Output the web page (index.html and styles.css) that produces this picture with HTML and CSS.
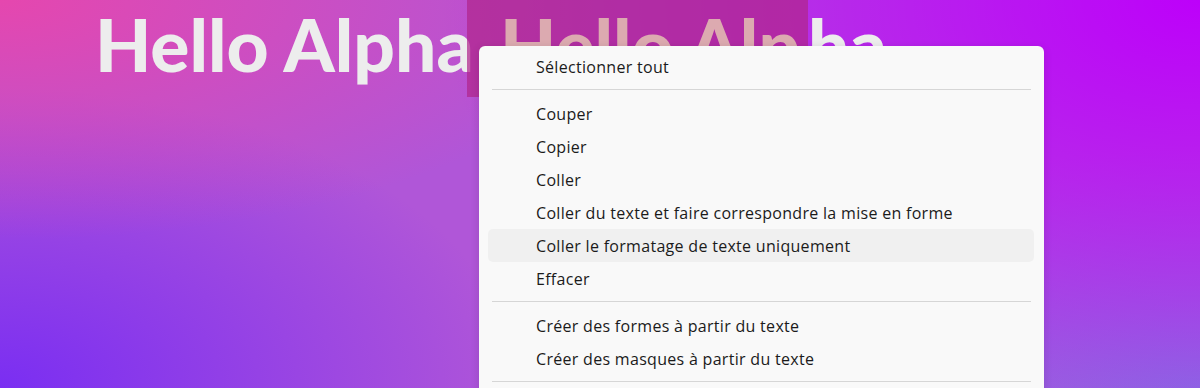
FILE: index.html
```html
<!DOCTYPE html>
<html lang="fr">
<head>
<meta charset="utf-8">
<link rel="stylesheet" href="styles.css">
</head>
<body>
<div class="stage">
  <h1 class="headline">Hello Alpha<span class="sel"> Hello Alp</span>ha</h1>
  <div class="menu">
    <div class="item">Sélectionner tout</div>
    <div class="sep"></div>
    <div class="item">Couper</div>
    <div class="item">Copier</div>
    <div class="item">Coller</div>
    <div class="item">Coller du texte et faire correspondre la mise en forme</div>
    <div class="item hover">Coller le formatage de texte uniquement</div>
    <div class="item">Effacer</div>
    <div class="sep"></div>
    <div class="item">Créer des formes à partir du texte</div>
    <div class="item">Créer des masques à partir du texte</div>
    <div class="sep"></div>
  </div>
</div>
</body>
</html>
```
FILE: styles.css
```css
html, body {
  margin: 0;
  padding: 0;
}
.stage {
  position: relative;
  width: 1200px;
  height: 388px;
  overflow: hidden;
  background:
    radial-gradient(ellipse 620px 240px at 0% 0%, rgba(232, 70, 172, 0.95), rgba(232, 70, 172, 0) 100%),
    radial-gradient(ellipse 760px 460px at 100% 0%, #bd00fa, rgba(189, 0, 250, 0) 100%),
    radial-gradient(ellipse 520px 300px at 0% 100%, #7a2ef2, rgba(122, 46, 242, 0) 100%),
    radial-gradient(ellipse 480px 240px at 100% 100%, #8672e0, rgba(134, 114, 224, 0) 100%),
    #b056d8;
}
.headline {
  margin: 0;
  padding: 1px 0 0 95px;
  font-family: "Lato", sans-serif;
  font-weight: 900;
  font-size: 73px;
  line-height: 86px;
  color: #ededed;
  white-space: nowrap;
}
.sel {
  background: rgba(176, 38, 140, 0.72);
  color: #dcaab0;
  margin-left: -7px;
  padding: 2px 8px 9px 16px;
}
.menu {
  position: absolute;
  left: 479px;
  top: 46px;
  width: 565px;
  padding: 4px 0 20px;
  background: #f9f9f9;
  border-radius: 6px;
  box-shadow: 0 2px 10px rgba(0, 0, 0, 0.12);
  font-family: "Open Sans", sans-serif;
  font-size: 16px;
  letter-spacing: 0.3px;
  color: #1b1b1b;
}
.item {
  height: 33px;
  display: flex;
  align-items: center;
  margin: 0 10px 0 9px;
  padding-left: 48px;
  border-radius: 5px;
}
.item.hover {
  background: #f0f0f0;
}
.sep {
  height: 1px;
  margin: 6px 13px 7px;
  background: #d6d6d6;
}
```
